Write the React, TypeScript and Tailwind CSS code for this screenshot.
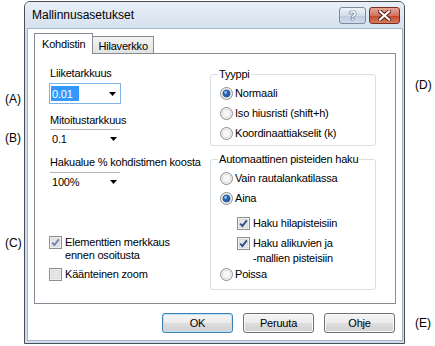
import React from 'react';

const Arrow = () => (
  <svg width="7" height="4" viewBox="0 0 7 4" className="shrink-0">
    <polygon points="0,0 7,0 3.5,4" fill="#000" />
  </svg>
);

const Radio = ({ on }: { on?: boolean }) => (
  <svg width="13" height="13" viewBox="0 0 13 13" className="shrink-0">
    <circle cx="6.5" cy="6.5" r="6" fill="#f1f1f1" stroke="#8e8f8f" />
    <circle cx="6.5" cy="6.5" r="4.6" fill="#e2e2e2" />
    <circle cx="6.5" cy="6.5" r="3.4" fill="#f7f7f7" />
    {on && (
      <>
        <circle cx="6.5" cy="6.5" r="3.6" fill="#2563b0" stroke="#1a4b8a" strokeWidth="0.6" />
        <circle cx="5.6" cy="5.5" r="1.4" fill="#8fc2f2" />
      </>
    )}
  </svg>
);

const Check = ({ on, faded }: { on?: boolean; faded?: boolean }) => (
  <svg width="13" height="13" viewBox="0 0 13 13" className="shrink-0">
    <rect x="0.5" y="0.5" width="12" height="12" fill="#fff" stroke="#8e8f8f" />
    <rect x="2" y="2" width="9" height="9" fill="#e6e6e6" stroke="#c9c9c9" strokeWidth="0.6" />
    {on && (
      <path
        d="M3.2 6.6 L5.4 9 L9.8 3.4"
        fill="none"
        stroke={faded ? '#6f86b3' : '#2c4f8c'}
        strokeWidth="1.9"
      />
    )}
  </svg>
);

const FlatCombo = ({ value }: { value: string }) => (
  <div className="w-[70px] h-[19px] border-t border-[#b4b4b4] flex items-center pl-[2px] pr-[3px]">
    <span>{value}</span>
    <span className="ml-auto">
      <Arrow />
    </span>
  </div>
);

const RadioRow = ({ on, label, h = 'h-[20px]' }: { on?: boolean; label: string; h?: string }) => (
  <div className={`${h} flex items-center gap-[2px] ml-[1px]`}>
    <Radio on={on} />
    <span>{label}</span>
  </div>
);

const Btn = ({ label, def }: { label: string; def?: boolean }) => (
  <button
    className={
      'w-[71px] h-[20px] rounded-[3px] border flex items-center justify-center bg-[linear-gradient(to_bottom,#f4f4f4_0%,#ececec_50%,#dedede_50%,#d0d0d0_100%)] ' +
      (def ? 'border-[#3c7fb1] shadow-[inset_0_0_0_1px_#bfe3f8]' : 'border-[#707070] shadow-[inset_0_0_0_1px_#fbfbfb]')
    }
  >
    {label}
  </button>
);

const Window = () => (
  <div className="mt-[1px] w-[381px] h-[343px] shrink-0 flex flex-col border border-[#4a4f57] rounded-t-[6px] bg-[#cfdeee]">
    <div className="h-[26px] flex items-start pl-[7px] pr-[4px] rounded-t-[5px] bg-[linear-gradient(to_bottom,#e8eff7,#d6e2ef)]">
      <span className="mt-[6px] text-[12px] tracking-normal leading-[15px]">Mallinnusasetukset</span>
      <div className="ml-auto mt-[5px] flex gap-[3px]">
        <div className="w-[27px] h-[17px] rounded-[3px] border border-[#7b8ba1] bg-[linear-gradient(to_bottom,#eef3f9,#d3deeb_50%,#bccbdd_51%,#cfdcea)] flex items-center justify-center">
          <span className="text-[13px] font-bold leading-[13px] text-white [text-shadow:0_0_1px_#3a4a60,0_0_1px_#3a4a60,0_0_1px_#3a4a60]">?</span>
        </div>
        <div className="w-[31px] h-[17px] rounded-[3px] border border-[#7a2f25] bg-[linear-gradient(to_bottom,#e9a597,#d0745f_50%,#c1442c_51%,#d77c5e)] flex items-center justify-center">
          <svg width="13" height="11" viewBox="0 0 13 11">
            <path d="M2 1.5 L11 9.5 M11 1.5 L2 9.5" stroke="#4a1a12" strokeWidth="4" strokeLinecap="square" />
            <path d="M2 1.5 L11 9.5 M11 1.5 L2 9.5" stroke="#fff" strokeWidth="2.2" strokeLinecap="square" />
          </svg>
        </div>
      </div>
    </div>
    <div className="flex-1 ml-[2px] mr-[1px] mb-[2px] bg-white border border-[#a7b4c4] flex flex-col pl-[6px] pt-[4px]">
      {/* tabs */}
      <div className="h-[20px] flex items-end">
        <div className="relative z-10 h-[21px] -mb-[1px] px-[7px] bg-white border border-b-0 border-[#898c95] flex items-center">
          Kohdistin
        </div>
        <div className="h-[17px] px-[5px] pt-[2px] border border-l-0 border-b-0 border-[#898c95] bg-[linear-gradient(to_bottom,#f3f3f3,#e2e2e2)] flex items-center">
          Hilaverkko
        </div>
      </div>
      {/* panel */}
      <div className="w-[362px] h-[251px] border border-[#898c95] flex">
        <div className="w-[175px] pl-[15px] pt-[12px] flex flex-col items-start">
          <span>Liiketarkkuus</span>
          <div className="mt-[3px] w-[72px] h-[21px] border border-[#7eb4ea] flex items-center pl-[1px] pr-[4px] -ml-[1px]">
            <span className="w-[28px] h-[15px] bg-[#3399ff] text-white pl-[1px] flex items-center">0.01</span>
            <span className="ml-auto">
              <Arrow />
            </span>
          </div>
          <span className="mt-[9px]">Mitoitustarkkuus</span>
          <div className="mt-[2px]">
            <FlatCombo value="0.1" />
          </div>
          <span className="mt-[7px]">Hakualue % kohdistimen koosta</span>
          <div className="mt-[3px]">
            <FlatCombo value="100%" />
          </div>
          <div className="mt-[44px] flex items-start gap-[3px] -ml-[1px]">
            <div className="mt-[1px]">
              <Check on faded />
            </div>
            <span className="leading-[13px] mt-[1px]">
              Elementtien merkkaus
              <br />
              ennen osoitusta
            </span>
          </div>
          <div className="mt-[5px] flex items-center gap-[3px] -ml-[1px] h-[14px]">
            <Check />
            <span>Käänteinen zoom</span>
          </div>
        </div>
        <div className="w-[166px] pt-[13px] flex flex-col">
          <fieldset className="border border-[#d5dfe5] rounded-[3px] pl-[8px] pr-[4px] pt-[2px] pb-[2px]">
            <legend className="px-[1px] -ml-[1px] leading-[14px]">Tyyppi</legend>
            <RadioRow on label="Normaali" />
            <RadioRow label="Iso hiusristi (shift+h)" />
            <RadioRow label="Koordinaattiakselit (k)" />
          </fieldset>
          <fieldset className="mt-[6px] border border-[#d5dfe5] rounded-[3px] pl-[8px] pr-[4px] pt-[2px] pb-[7px]">
            <legend className="px-[1px] -ml-[1px] leading-[14px]">Automaattinen pisteiden haku</legend>
            <RadioRow label="Vain rautalankatilassa" />
            <RadioRow on label="Aina" />
            <div className="mt-[5px] h-[20px] pl-[18px] flex items-center gap-[3px]">
              <Check on />
              <span>Haku hilapisteisiin</span>
            </div>
            <div className="mt-[3px] pl-[18px] flex items-start gap-[3px]">
              <div className="mt-[1px]">
                <Check on />
              </div>
              <span className="leading-[15px]">
                Haku alikuvien ja
                <br />
                -mallien pisteisiin
              </span>
            </div>
            <RadioRow label="Poissa" h="h-[16px]" />
          </fieldset>
        </div>
      </div>
      {/* buttons */}
      <div className="mt-[9px] w-[362px] flex justify-end gap-[10px] pr-[1px]">
        <Btn label="OK" def />
        <Btn label="Peruuta" />
        <Btn label="Ohje" />
      </div>
    </div>
  </div>
);

export default function App() {
  return (
    <div className="flex w-[435px] h-[346px] bg-white overflow-hidden font-['Liberation_Sans',Arial,sans-serif] text-[11px] tracking-[-0.2px] leading-[14px] text-black">
      <div className="w-[24px] shrink-0 flex flex-col pl-[5px] pt-[92px] text-[12px] tracking-normal whitespace-nowrap">
        <span>(A)</span>
        <span className="mt-[25px]">(B)</span>
        <span className="mt-[91px]">(C)</span>
      </div>
      <Window />
      <div className="flex-1 flex flex-col pl-[10px] pt-[78px] text-[12px] tracking-normal whitespace-nowrap">
        <span>(D)</span>
        <span className="mt-[224px]">(E)</span>
      </div>
    </div>
  );
}
